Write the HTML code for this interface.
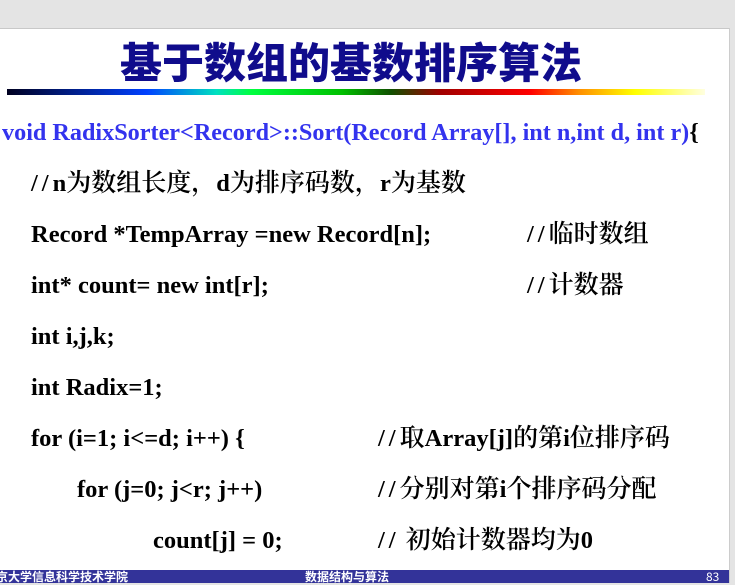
<!DOCTYPE html>
<html><head><meta charset="utf-8"><style>
body{margin:0;width:735px;height:583px;overflow:hidden;background:#e4e4e4;position:relative;font-family:"Liberation Serif","Noto Serif CJK SC",serif}
#slide{position:absolute;left:0;top:28px;width:729px;height:542px;background:#fff;border-top:1px solid #c8c8c8}
#edge{position:absolute;left:729px;top:28px;width:6px;height:555px;background:#e4e4e4;border-left:1px solid #ccc}
.t{position:absolute;white-space:pre;font-weight:bold;font-size:24.5px;color:#000;line-height:25px}
.c{font-size:25px;font-weight:600;font-family:"Noto Serif CJK SC",serif;line-height:0}
.s{letter-spacing:4px}
h1{position:absolute;left:0;width:702px;top:36px;margin:0;text-align:center;font-family:"Noto Sans CJK SC",sans-serif;font-weight:900;font-size:42px;color:#100c8c;line-height:50px}
#bar{position:absolute;left:7px;top:89px;width:698px;height:6px;background:linear-gradient(90deg,#000020,#0040ff 20%,#00e0c0 30%,#00ff40 35%,#00c000 48%,#105000 55%,#a00000 62%,#ff0000 75%,#ff9000 82%,#ffff00 90%,#ffffe0 100%)}
#foot{position:absolute;left:0;top:570px;width:729px;height:13px;background:#333399;color:#fff;font-family:"Noto Sans CJK SC",sans-serif;font-size:12px;line-height:13px;font-weight:bold}
</style></head><body>
<div id="slide"></div><div id="edge"></div>
<h1>基于数组的基数排序算法</h1>
<div id="bar"></div>
<div class="t" style="left:2px;top:120px;color:#3333ee;font-size:24.2px;font-weight:bold">void RadixSorter&lt;Record&gt;::Sort(Record Array[], int n,int d, int r)<span style="color:#000">{</span></div>
<div class="t" style="left:31px;top:171px"><span class="s">//</span>n<span class="c">为数组长度，</span>d<span class="c">为排序码数，</span>r<span class="c">为基数</span></div>
<div class="t" style="left:31px;top:222px">Record *TempArray =new Record[n];</div>
<div class="t" style="left:527px;top:222px"><span class="s">//</span><span class="c">临时数组</span></div>
<div class="t" style="left:31px;top:273px">int* count= new int[r];</div>
<div class="t" style="left:527px;top:273px"><span class="s">//</span><span class="c">计数器</span></div>
<div class="t" style="left:31px;top:324px">int i,j,k;</div>
<div class="t" style="left:31px;top:375px">int Radix=1;</div>
<div class="t" style="left:31px;top:426px">for (i=1; i&lt;=d; i++) {</div>
<div class="t" style="left:378px;top:426px"><span class="s">//</span><span class="c">取</span>Array[j]<span class="c">的第</span>i<span class="c">位排序码</span></div>
<div class="t" style="left:77px;top:477px">for (j=0; j&lt;r; j++)</div>
<div class="t" style="left:378px;top:477px"><span class="s">//</span><span class="c">分别对第</span>i<span class="c">个排序码分配</span></div>
<div class="t" style="left:153px;top:528px">count[j] = 0;</div>
<div class="t" style="left:378px;top:528px"><span class="s">//</span> <span class="c">初始计数器均为</span>0</div>
<div id="foot"><span style="position:absolute;left:-4px">京大学信息科学技术学院</span><span style="position:absolute;left:305px">数据结构与算法</span><span style="position:absolute;left:706px;font-weight:normal">83</span></div>
</body></html>
